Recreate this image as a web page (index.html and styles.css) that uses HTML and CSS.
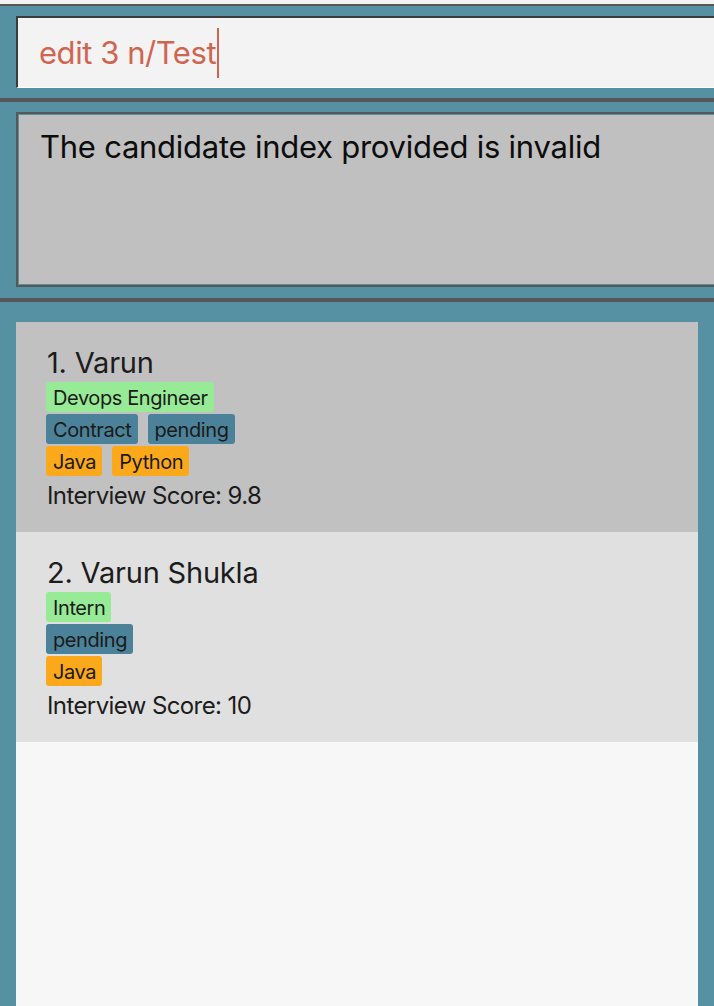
FILE: index.html
```html
<!DOCTYPE html>
<html lang="en">
<head>
<meta charset="utf-8">
<title>Candidates</title>
<link rel="stylesheet" href="styles.css">
</head>
<body>
<div class="app">
  <div class="top-strip"></div>
  <div class="sep sep-thin"></div>
  <section class="command-pane">
    <div class="command-box"><span class="command-text">edit 3 n/Test</span><span class="caret"></span></div>
  </section>
  <div class="sep"></div>
  <section class="result-pane">
    <div class="result-box">
      <div class="result-inner">The candidate index provided is invalid</div>
    </div>
  </section>
  <div class="sep"></div>
  <section class="list-pane">
    <div class="list">
      <div class="card card-selected">
        <div class="name">1. Varun</div>
        <div class="tag-rows">
          <div class="tag-row"><span class="tag tag-green">Devops Engineer</span></div>
          <div class="tag-row"><span class="tag tag-blue">Contract</span><span class="tag tag-blue">pending</span></div>
          <div class="tag-row"><span class="tag tag-orange">Java</span><span class="tag tag-orange">Python</span></div>
        </div>
        <div class="score">Interview Score: 9.8</div>
      </div>
      <div class="card">
        <div class="name">2. Varun Shukla</div>
        <div class="tag-rows">
          <div class="tag-row"><span class="tag tag-green">Intern</span></div>
          <div class="tag-row"><span class="tag tag-blue">pending</span></div>
          <div class="tag-row"><span class="tag tag-orange">Java</span></div>
        </div>
        <div class="score">Interview Score: 10</div>
      </div>
    </div>
  </section>
</div>
</body>
</html>
```

FILE: styles.css
```css
html, body {
  margin: 0;
  padding: 0;
  background: #f3f3f3;
  overflow: hidden;
}

.app {
  width: 714px;
  height: 1006px;
  display: flex;
  flex-direction: column;
  font-family: Inter, "Noto Sans", sans-serif;
  overflow: hidden;
}

.top-strip {
  height: 4px;
  background: #f2f2f2;
  flex: none;
}

.sep {
  height: 4px;
  background: #575757;
  flex: none;
}

.sep-thin {
  height: 2px;
}

.command-pane {
  background: #5591a3;
  padding: 10px 0 10px 16px;
  flex: none;
}

.command-box {
  height: 69px;
  background: #f3f3f3;
  border-top: 2px solid #3b3b3b;
  border-left: 2px solid #3b3b3b;
  border-bottom: 1px solid #ffffff;
  padding-left: 21px;
  display: flex;
  align-items: center;
  margin-right: -20px;
}

.command-text {
  font-size: 31px;
  color: #d0654f;
  letter-spacing: -0.45px;
  line-height: 36px;
}

.caret {
  display: inline-block;
  width: 2px;
  height: 50px;
  background: #d0654f;
  margin-left: 1px;
}

.result-pane {
  background: #5591a3;
  padding: 10px 0 11px 16px;
  flex: none;
}

.result-box {
  border: 2px solid #575757;
  border-right: none;
  padding: 1px 0 1px 1px;
  margin-right: -20px;
}

.result-inner {
  height: 169px;
  box-sizing: border-box;
  background: #c0c0c0;
  padding: 13px 0 0 21px;
  font-size: 31px;
  line-height: 38px;
  color: #0c0c0c;
  letter-spacing: -0.25px;
}

.list-pane {
  background: #5591a3;
  padding: 20px 16px 0 16px;
  flex: 1;
  display: flex;
  flex-direction: column;
}

.list {
  flex: 1;
  background: #f7f7f7;
}

.card {
  height: 210px;
  box-sizing: border-box;
  background: #e0e0e0;
  padding: 23px 0 0 30px;
  display: flex;
  flex-direction: column;
  color: #1c1c1c;
}

.card-selected {
  background: #c1c1c1;
}

.name {
  font-size: 29px;
  line-height: 36px;
  padding-left: 1px;
  letter-spacing: -0.2px;
}

.tag-rows {
  margin-top: 1px;
  display: flex;
  flex-direction: column;
  gap: 2px;
}

.tag-row {
  display: flex;
  gap: 10px;
}

.tag {
  height: 30px;
  line-height: 32px;
  padding: 0 6px 0 7px;
  border-radius: 3px;
  font-size: 20px;
  letter-spacing: -0.4px;
  color: #1a1a1a;
}

.tag-green {
  background: #97ea96;
}

.tag-blue {
  background: #4b8299;
}

.tag-orange {
  background: #fba81b;
}

.score {
  margin-top: 4px;
  font-size: 24px;
  line-height: 31px;
  padding-left: 1px;
  letter-spacing: -0.6px;
}
```
